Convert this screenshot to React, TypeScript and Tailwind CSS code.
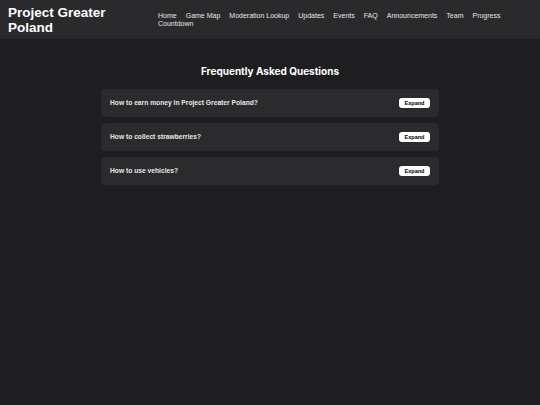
import React from 'react';

const links = ['Home', 'Game Map', 'Moderation Lookup', 'Updates', 'Events', 'FAQ', 'Announcements', 'Team', 'Progress', 'Countdown'];

const questions = [
  'How to earn money in Project Greater Poland?',
  'How to collect strawberries?',
  'How to use vehicles?',
];

export default function App() {
  return (
    <div className="min-h-[405px] bg-[#1e1e20] text-white font-['Liberation_Sans',Arial,sans-serif]">
      {/* Header */}
      <header className="flex h-[39px] items-center bg-[#2a2a2c] px-[8px]">
        <div className="w-[150px] shrink-0">
          <h1 className="max-w-[112px] text-[13.5px] font-bold leading-[15px]">Project Greater Poland</h1>
        </div>
        <nav className="flex w-[360px] flex-wrap gap-x-[9px] text-[7px] leading-[7.5px] text-[#e6e6e6]">
          {links.map((l) => (
            <a key={l} href="#" className="whitespace-nowrap">
              {l}
            </a>
          ))}
        </nav>
      </header>

      {/* FAQ */}
      <main className="mx-auto w-[338px] pt-[25px]">
        <h2 className="mb-[11px] text-center text-[10px] font-bold leading-[14px] font-['Inter',sans-serif]">
          Frequently Asked Questions
        </h2>
        <div className="flex flex-col gap-[6px]">
          {questions.map((q) => (
            <div key={q} className="flex h-[28px] items-center justify-between rounded-[4px] bg-[#2b2b2d] pl-[9px] pr-[9px]">
              <span className="text-[6.7px] font-bold text-[#e8e8e8]">{q}</span>
              <button className="h-[10px] w-[31px] rounded-[3px] bg-white text-[5.5px] font-bold leading-[10px] text-black">
                Expand
              </button>
            </div>
          ))}
        </div>
      </main>
    </div>
  );
}
